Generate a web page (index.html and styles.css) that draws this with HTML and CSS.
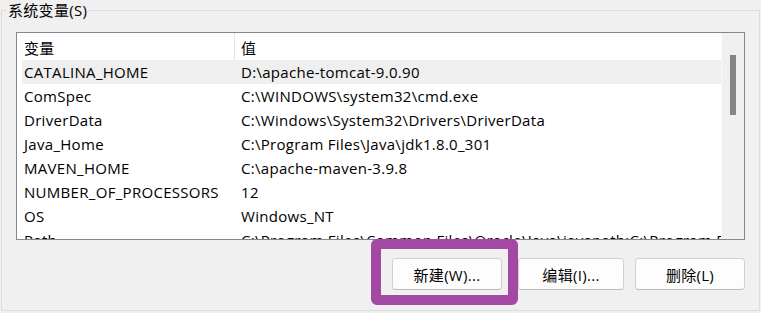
FILE: index.html
```html
<!DOCTYPE html>
<html lang="zh-CN">
<head>
    <meta charset="UTF-8">
    <meta name="viewport" content="width=device-width, initial-scale=1.0">
    <title>系统变量</title>
    <link rel="stylesheet" href="styles.css">
</head>
<body>
    <fieldset class="group">
        <legend>系统变量(S)</legend>

        <div class="listview">
            <div class="list-body">
                <div class="list-header">
                    <span class="head-name">变量</span>
                    <span class="head-value">值</span>
                </div>
                <div class="row selected"><span>CATALINA_HOME</span><span>D:\apache-tomcat-9.0.90</span></div>
                <div class="row"><span>ComSpec</span><span>C:\WINDOWS\system32\cmd.exe</span></div>
                <div class="row"><span>DriverData</span><span>C:\Windows\System32\Drivers\DriverData</span></div>
                <div class="row"><span>Java_Home</span><span>C:\Program Files\Java\jdk1.8.0_301</span></div>
                <div class="row"><span>MAVEN_HOME</span><span>C:\apache-maven-3.9.8</span></div>
                <div class="row"><span>NUMBER_OF_PROCESSORS</span><span>12</span></div>
                <div class="row"><span>OS</span><span>Windows_NT</span></div>
                <div class="row"><span>Path</span><span>C:\Program Files\Common Files\Oracle\Java\javapath;C:\Program Files (x86)\Common Files</span></div>
            </div>
            <div class="scrollbar">
                <div class="thumb"></div>
            </div>
        </div>

        <div class="buttons">
            <button class="btn btn-new">新建(W)...</button>
            <button class="btn btn-edit">编辑(I)...</button>
            <button class="btn btn-del">删除(L)</button>
        </div>
    </fieldset>

    <!-- 标注框 -->
    <div class="highlight"></div>
</body>
</html>
```

FILE: styles.css
```css
body {
    margin: 0;
    background: #f0f0f0;
    font-family: "Open Sans", "Noto Sans CJK SC", sans-serif;
    font-size: 15px;
    letter-spacing: 0.3px;
    color: #000;
    overflow: hidden;
    position: relative;
    height: 313px;
}
.group {
    box-sizing: border-box;
    margin: 0 1px;
    height: 311px;
    padding: 12px 14px 0 14px;
    border: 1px solid #dcdcdc;
    min-width: 0;
}
.group legend {
    margin-left: -10px;
    padding: 0 2px;
    line-height: 20px;
}
.listview {
    display: flex;
    height: 206px;
    border: 1px solid #828790;
    background: #fff;
}
.list-body {
    width: 704px;
    overflow: hidden;
}
.list-header {
    display: flex;
    height: 27px;
    line-height: 24px;
    padding-top: 3px;
    box-sizing: border-box;
    background: #fff;
}
.head-name {
    width: 210px;
    margin-left: 7px;
    border-right: 1px solid #e5e5e5;
    margin-top: -3px;
    padding-top: 3px;
}
.head-value {
    padding-left: 6px;
}
.row {
    display: grid;
    grid-template-columns: 212px 1fr;
    height: 24px;
    line-height: 24px;
    margin-left: 5px;
    padding-left: 2px;
    white-space: nowrap;
}
.row span:last-child {
    padding-left: 5px;
    overflow: hidden;
}
.row.selected {
    background: #efefef;
}
.scrollbar {
    width: 22px;
    border-left: 1px solid #fafafa;
    background: #f0f0f0;
}
.thumb {
    width: 6px;
    height: 60px;
    margin: 22px 0 0 8px;
    background: #858585;
}
.buttons {
    display: flex;
    justify-content: flex-end;
    margin-top: 18px;
}
.btn {
    height: 32px;
    font-family: inherit;
    font-size: 15px;
    letter-spacing: 0.3px;
    color: #000;
    background: #fdfdfd;
    border: 1px solid #d0d0d0;
    border-bottom-color: #bcbcbc;
    border-radius: 4px;
    padding: 0;
}
.btn-new {
    width: 110px;
    margin-right: 16px;
}
.btn-edit {
    width: 106px;
    margin-right: 11px;
}
.btn-del {
    width: 110px;
}
.highlight {
    position: absolute;
    left: 371px;
    top: 239px;
    width: 147px;
    height: 66px;
    box-sizing: border-box;
    border: 10px solid #a349a4;
    border-radius: 6px;
}
```
